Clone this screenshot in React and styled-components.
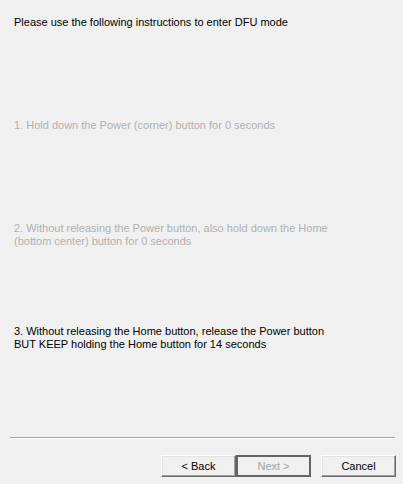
import React from "react";
import styled, { createGlobalStyle } from "styled-components";

const GlobalStyle = createGlobalStyle`
  html, body {
    margin: 0;
    padding: 0;
    background: #f0f0f0;
  }
  body {
    font-family: "Liberation Sans", Arial, sans-serif;
    font-size: 11px;
  }
`;

const Wizard = styled.div`
  width: 403px;
  height: 484px;
  background: #f0f0f0;
  display: flex;
  flex-direction: column;
  box-sizing: border-box;
`;

const Body = styled.div`
  flex: 1;
  display: grid;
  grid-template-rows: repeat(4, 103px);
  align-content: start;
  padding: 16px 0 0 14px;
`;

const Line = styled.div`
  line-height: 13px;
  white-space: pre-line;
  color: ${p => (p.$dim ? "#b0b0b0" : "#000")};
`;

const Footer = styled.div`
  padding: 0 7px 7px 10px;
`;

const Separator = styled.div`
  margin-right: 1px;
  border-top: 1px solid #a0a0a0;
  border-bottom: 1px solid #fff;
`;

const ButtonRow = styled.div`
  display: flex;
  justify-content: flex-end;
  margin-top: 16px;
`;

const Button = styled.button`
  width: 75px;
  height: 22px;
  margin-left: ${p => (p.$gap ? "10px" : "0")};
  padding: 0;
  box-sizing: border-box;
  font-family: "Liberation Sans", Arial, sans-serif;
  font-size: 11px;
  background: #f0f0f0;
  color: ${p => (p.disabled ? "#a0a0a0" : "#000")};
  border: ${p => (p.$default ? "2px solid #646464" : "1px solid")};
  border-color: ${p =>
    p.$default ? "#646464" : "#ffffff #696969 #696969 #ffffff"};
  box-shadow: ${p =>
    p.$default ? "none" : "inset -1px -1px 0 #a0a0a0, inset 1px 1px 0 #e3e3e3"};
`;

const steps = [
  { text: "1. Hold down the Power (corner) button for 0 seconds", dim: true },
  {
    text:
      "2. Without releasing the Power button, also hold down the Home\n(bottom center) button for 0 seconds",
    dim: true
  },
  {
    text:
      "3. Without releasing the Home button, release the Power button\nBUT KEEP holding the Home button for 14 seconds",
    dim: false
  }
];

export default function App() {
  return (
    <Wizard>
      <GlobalStyle />
      <Body>
        <Line>Please use the following instructions to enter DFU mode</Line>
        {steps.map((s, i) => (
          <Line key={i} $dim={s.dim}>
            {s.text}
          </Line>
        ))}
      </Body>
      <Footer>
        <Separator />
        <ButtonRow>
          <Button>&lt; Back</Button>
          <Button $default disabled>
            Next &gt;
          </Button>
          <Button $gap>Cancel</Button>
        </ButtonRow>
      </Footer>
    </Wizard>
  );
}
